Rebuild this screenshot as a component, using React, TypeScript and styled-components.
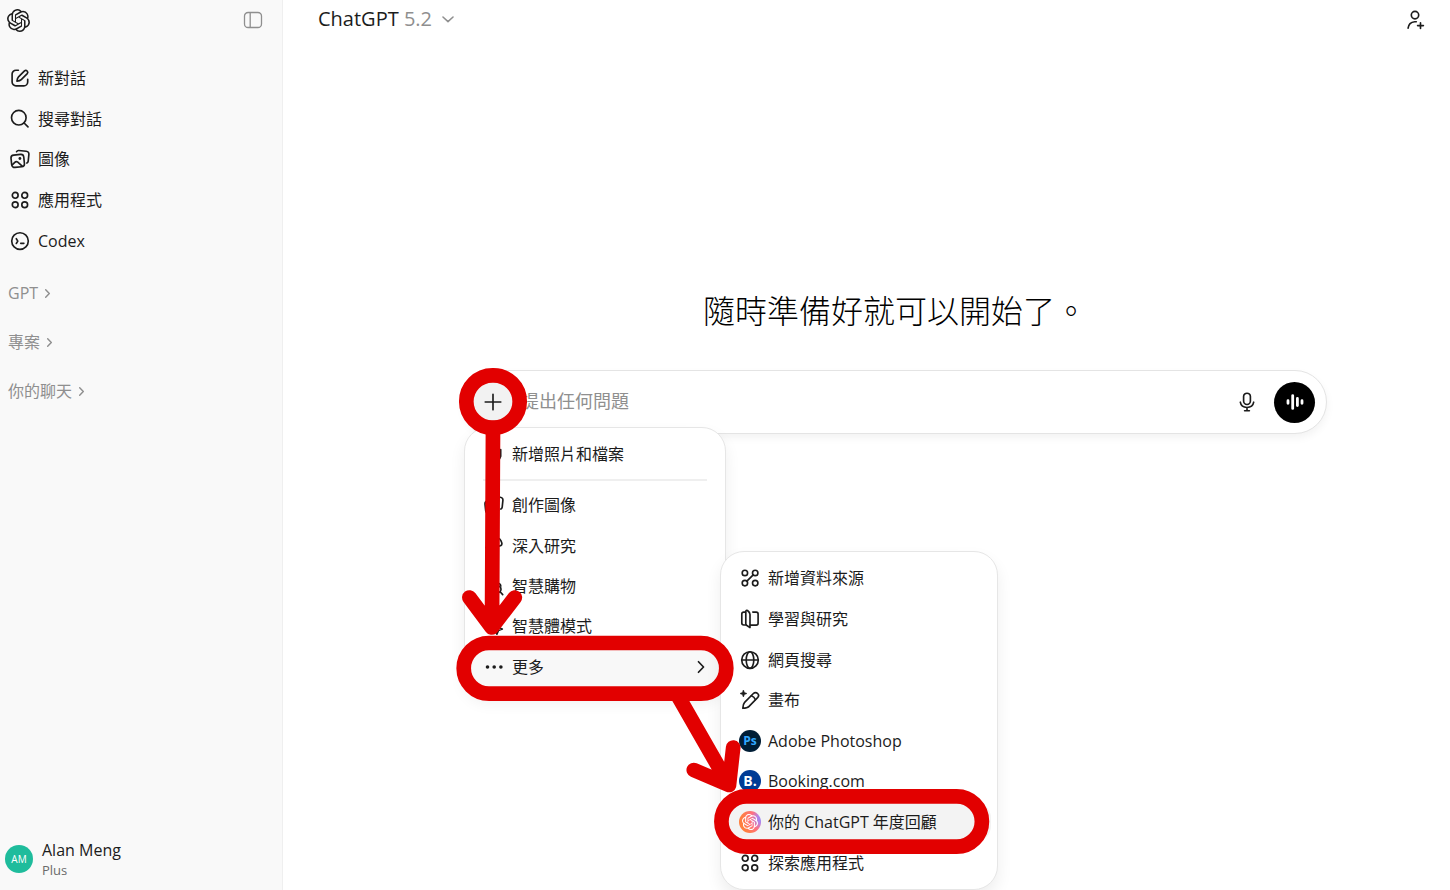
import React from "react";
import styled, { createGlobalStyle } from "styled-components";
import { SiOpenai } from "react-icons/si";

const GlobalStyle = createGlobalStyle`
  *, *::before, *::after { box-sizing: border-box; }
  body {
    margin: 0;
    background: #fff;
    color: #1c1c1c;
    font-family: "Open Sans", "Noto Sans CJK TC", sans-serif;
    font-size: 16px;
    line-height: 24px;
  }
  button, input { font: inherit; color: inherit; }
  button { border: 0; padding: 0; background: none; cursor: pointer; }
  a { color: inherit; text-decoration: none; }
`;

/* ---------- icons ---------- */

const IconSvg = styled.svg<{ $size: number }>`
  display: block;
  flex: none;
  width: ${(p) => p.$size}px;
  height: ${(p) => p.$size}px;
  fill: none;
  stroke: currentColor;
  stroke-width: 1.65;
  stroke-linecap: round;
  stroke-linejoin: round;
`;

function Icon({ size = 20, children }: { size?: number; children: React.ReactNode }) {
  return (
    <IconSvg $size={size} viewBox="0 0 20 20" aria-hidden="true">
      {children}
    </IconSvg>
  );
}

const PanelIcon = () => (
  <Icon>
    <rect x="1.5" y="2.5" width="17" height="15" rx="3.6" strokeWidth="1.3" />
    <path d="M7.2 2.8v14.4" strokeWidth="1.3" />
  </Icon>
);
const ComposeIcon = () => (
  <Icon>
    <path d="M8.4 2.2H6A3.9 3.9 0 0 0 2.1 6.1v7.8A3.9 3.9 0 0 0 6 17.8h7.8a3.9 3.9 0 0 0 3.9-3.9v-2.6" />
    <path d="M8.5 8.9l6-6a1.95 1.95 0 0 1 2.75 2.75l-6 6c-1 1-2.2 1.3-4.3 1.5.2-2.1.5-3.2 1.55-4.25z" />
  </Icon>
);
const SearchIcon = () => (
  <Icon>
    <circle cx="8.8" cy="8.7" r="7.3" />
    <path d="M14.1 14l3.9 3.8" />
  </Icon>
);
const ImagesIcon = () => (
  <Icon>
    <rect x="1.3" y="5.7" width="12.8" height="12.4" rx="3" transform="rotate(-6 7.6 11.7)" />
    <path d="M6.6 2.7c.5-.9 1.2-1.3 2.2-1.2l7.4.8c1.9.2 2.9 1.3 2.7 3.1l-.7 6.8c-.1.9-.5 1.5-1.3 1.9" />
    <path d="M2.5 15.6l2.3-2.3c.9-.9 2-.9 3-.1l4.4 3.9" />
    <circle cx="9.9" cy="9.5" r="1.4" fill="currentColor" stroke="none" />
  </Icon>
);
const AppsIcon = () => (
  <Icon>
    <circle cx="5.2" cy="5.3" r="2.9" />
    <circle cx="14.7" cy="5.3" r="2.9" />
    <circle cx="5.2" cy="14.7" r="2.9" />
    <circle cx="14.7" cy="14.7" r="2.9" />
  </Icon>
);
const CodexIcon = () => (
  <Icon>
    <circle cx="10" cy="10" r="8.3" />
    <path d="M6.3 7.7l1.5 2.4-1.5 2.4M10.7 12.3h3.2" />
  </Icon>
);
const ChevronRight = ({ size = 18 }: { size?: number }) => (
  <Icon size={size}>
    <path d="M7.2 4.2l5.6 5.8-5.6 5.8" strokeWidth={size < 16 ? 2.2 : 1.9} />
  </Icon>
);
const ChevronDown = () => (
  <Icon size={14}>
    <path d="M2.8 7.2l7.2 6.6 7.2-6.6" strokeWidth="2.2" />
  </Icon>
);
const InviteIcon = () => (
  <Icon>
    <circle cx="10" cy="5.1" r="3.7" />
    <path d="M3.1 18.2c.4-3.9 3-6.2 6.6-6.5h1.6M15.5 12.7v5.8M12.6 15.6h5.8" />
  </Icon>
);
const PlusIcon = () => (
  <Icon>
    <path d="M10 2.2v15.6M2.2 10h15.6" />
  </Icon>
);
const MicIcon = () => (
  <Icon>
    <rect x="6.6" y="1.2" width="6.8" height="11.3" rx="3.4" />
    <path d="M3.3 10.2c.6 3.4 3.2 5.3 6.7 5.3s6.1-1.9 6.7-5.3M10 15.6v2.9M7.6 18.7h4.8" />
  </Icon>
);
const VoiceIcon = () => (
  <Icon>
    <path d="M3 8.7v2.6M7.7 3.6v12.8M12.4 6.5v7M17 8.7v2.6" strokeWidth="2.8" />
  </Icon>
);
const ClipIcon = () => (
  <Icon>
    <path d="M13 6v7.5a4 4 0 0 1-8 0V5.5a2.7 2.7 0 0 1 5.4 0v7.3M16.7 5.5v6.8a7 7 0 0 1-7 5" />
  </Icon>
);
const TelescopeIcon = () => (
  <Icon>
    <path d="M2 11.5l11-9c1.800-.8 3 .2 4 2.300 1.200 2.600 1.300 4.300-.3 4.800L4 14.5zM10 12l-3 6" />
  </Icon>
);
const ShoppingIcon = () => (
  <Icon>
    <path d="M4 7h10M4 7L3 17h7M7 7a3 3 0 0 1 6 0c2 0 3.5 1 3.8 3" />
    <circle cx="13.6" cy="13.2" r="3.4" />
    <path d="M16.1 15.8l2.6 2.8" />
  </Icon>
);
const AgentIcon = () => (
  <Icon>
    <path d="M3 3h12v6M3 3v12h5M10 10l8.300 3.100-3.900 1.500-1.500 3.600z" />
  </Icon>
);
const DotsIcon = () => (
  <Icon>
    <g fill="currentColor" stroke="none">
      <circle cx="3.5" cy="10" r="1.8" />
      <circle cx="10.2" cy="10" r="1.8" />
      <circle cx="16.9" cy="10" r="1.8" />
    </g>
  </Icon>
);
const SourcesIcon = () => (
  <Icon>
    <circle cx="4.9" cy="4.9" r="2.7" />
    <circle cx="15.2" cy="4.9" r="2.7" />
    <circle cx="4.9" cy="15.1" r="2.7" />
    <circle cx="15.2" cy="15.1" r="2.7" />
    <path d="M6.9 13.1l6.3-6.2" />
  </Icon>
);
const BookIcon = () => (
  <Icon>
    <path d="M10 5.6v13l-3.1-2.1c-.7-.5-1.1-.9-1.1-1.7V2.6c0-1.2.9-1.7 1.7-1.1C9.3 2.8 10 3.8 10 5.6z" />
    <path d="M5.6 3.1H3.7c-1.2 0-1.9.7-1.9 1.9v9.1c0 1.2.7 1.9 1.9 1.9h2.4M10.3 16.1h5.900c1.200 0 1.900-.7 1.900-1.900V5c0-1.200-.7-1.900-1.900-1.900h-3.400" />
  </Icon>
);
const GlobeIcon = () => (
  <Icon>
    <circle cx="10" cy="10" r="8.3" />
    <ellipse cx="10" cy="10" rx="3.8" ry="8.3" />
    <path d="M1.8 10h16.4" />
  </Icon>
);
const CanvasIcon = () => (
  <Icon>
    <path d="M2.8 18.3c.2-2.7.5-4.6 1.8-5.9l8.8-8.9a2.95 2.95 0 0 1 4.2 4.2l-8.8 8.9c-1.3 1.3-3.4 1.6-6 1.7z" />
    <path d="M11.4 5.7c1.9.6 3.3 2 3.9 3.9" />
    <path d="M3.4 0l1 2.5 2.500 1-2.500 1-1 2.500-1-2.500-2.400-1 2.400-1z" fill="currentColor" strokeWidth="0.6" />
  </Icon>
);

/* ---------- layout ---------- */

const Page = styled.div`
  display: flex;
  min-height: 100vh;
`;

const Sidebar = styled.aside`
  display: flex;
  flex-direction: column;
  flex: none;
  width: 283px;
  padding-bottom: 11px;
  background: #f9f9f9;
  border-right: 1px solid #efefef;
`;

const SidebarTop = styled.div`
  display: flex;
  align-items: center;
  justify-content: space-between;
  height: 40px;
  padding: 0 19px 0 7px;
`;

const IconButton = styled.button<{ $muted?: boolean }>`
  display: flex;
  color: ${(p) => (p.$muted ? "#8f8f8f" : "#1c1c1c")};
`;

const NavList = styled.nav`
  display: grid;
  grid-auto-rows: 1fr;
  height: 203px;
  margin-top: 18px;
`;

const NavLink = styled.a`
  display: flex;
  align-items: center;
  gap: 8px;
  padding: 0 10px;
`;

const Sections = styled.div`
  display: flex;
  flex-direction: column;
  gap: 25px;
  margin-top: 20px;
`;

const SectionToggle = styled.button`
  display: flex;
  align-items: center;
  gap: 3px;
  padding: 0 8px;
  color: #8f8f8f;
`;

const Account = styled.button`
  display: flex;
  align-items: center;
  gap: 9px;
  margin-top: auto;
  padding: 0 5px;
  text-align: left;
`;

const Avatar = styled.span`
  display: grid;
  place-items: center;
  width: 28px;
  height: 28px;
  border-radius: 50%;
  background: #1fbc9c;
  color: #fff;
  font-size: 10px;
`;

const AccountText = styled.span`
  display: flex;
  flex-direction: column;
`;

const AccountName = styled.span`
  line-height: 22px;
`;

const AccountPlan = styled.span`
  color: #6b6b6b;
  font-size: 13px;
  line-height: 18px;
`;

const Main = styled.main`
  flex: 1;
  min-width: 0;
`;

const Header = styled.header`
  display: flex;
  align-items: center;
  justify-content: space-between;
  height: 40px;
  padding: 0 25px 0 35px;
`;

const ModelButton = styled.button`
  display: flex;
  align-items: center;
  gap: 9px;
  padding-bottom: 2px;
  color: #8f8f8f;
  font-size: 20px;
  line-height: 28px;
`;

const ModelName = styled.span`
  color: #1c1c1c;
`;

const Hero = styled.section`
  padding: 251px 123px 0 180px;
`;

const Title = styled.h1`
  margin: 0 0 39px;
  color: #000;
  font-size: 32px;
  font-weight: 300;
  line-height: 40px;
  text-align: center;
`;

const ComposerArea = styled.div`
  position: relative;
`;

const Composer = styled.form`
  display: flex;
  align-items: center;
  height: 64px;
  padding: 0 11px 0 8px;
  border: 1px solid #e4e4e4;
  border-radius: 32px;
  background: #fff;
  box-shadow: 0 4px 8px rgba(0, 0, 0, 0.05);
`;

const AddButton = styled.button`
  display: grid;
  place-items: center;
  width: 42px;
  height: 42px;
  border-radius: 50%;
  background: #f2f2f2;
`;

const Prompt = styled.input`
  flex: 1;
  min-width: 0;
  margin-left: 7px;
  padding: 0 0 2px;
  border: 0;
  outline: 0;
  background: none;
  font-size: 18px;
  line-height: 26px;
  &::placeholder { color: #8f8f8f; opacity: 1; }
`;

const MicButton = styled.button`
  display: grid;
  place-items: center;
  width: 36px;
  height: 36px;
  margin-right: 9px;
`;

const VoiceButton = styled.button`
  display: grid;
  place-items: center;
  width: 41px;
  height: 41px;
  border-radius: 50%;
  background: #000;
  color: #fff;
`;

/* ---------- menus ---------- */

const Menu = styled.div`
  position: absolute;
  top: 57px;
  left: 1px;
  width: 262px;
  padding: 6px;
  border: 1px solid #e6e6e6;
  border-radius: 24px;
  background: #fff;
  box-shadow: 0 8px 16px rgba(0, 0, 0, 0.07);
`;

const SubMenu = styled(Menu)`
  top: 181px;
  left: 257px;
  width: 278px;
`;

const MenuGroup = styled.div<{ $height: number }>`
  display: grid;
  grid-auto-rows: 1fr;
  height: ${(p) => p.$height}px;
`;

const MenuItem = styled.button<{ $active?: string }>`
  display: flex;
  align-items: center;
  gap: 7px;
  width: 100%;
  padding: 0 9px 0 12px;
  border-radius: 16px;
  background: ${(p) => p.$active ?? "none"};
  text-align: left;
  white-space: nowrap;
`;

const IconSlot = styled.span`
  display: grid;
  place-items: center;
  width: 22px;
  height: 22px;
`;

const MenuLabel = styled.span`
  flex: 1;
`;

const Separator = styled.hr`
  height: 2px;
  margin: 5px 12px 4px;
  border: 0;
  background: #efefef;
`;

const Badge = styled.span<{ $bg: string; $color?: string; $font?: number }>`
  display: grid;
  place-items: center;
  width: 22px;
  height: 22px;
  border-radius: 50%;
  background: ${(p) => p.$bg};
  color: ${(p) => p.$color ?? "#fff"};
  font-size: ${(p) => p.$font ?? 12}px;
  font-weight: 700;
  line-height: 22px;
`;

const Markup = styled.svg`
  position: absolute;
  top: -10px;
  left: -13px;
  width: 560px;
  height: 500px;
  fill: none;
  stroke: #e20000;
  stroke-width: 14.7;
  stroke-linecap: round;
  stroke-linejoin: round;
  pointer-events: none;
`;

const navItems = [
  { label: "新對話", icon: <ComposeIcon /> },
  { label: "搜尋對話", icon: <SearchIcon /> },
  { label: "圖像", icon: <ImagesIcon /> },
  { label: "應用程式", icon: <AppsIcon /> },
  { label: "Codex", icon: <CodexIcon /> },
];

const toolItems = [
  { label: "創作圖像", icon: <ImagesIcon /> },
  { label: "深入研究", icon: <TelescopeIcon /> },
  { label: "智慧購物", icon: <ShoppingIcon /> },
  { label: "智慧體模式", icon: <AgentIcon /> },
];

const reviewGradient =
  "radial-gradient(circle at 105% 35%, #8f8cf5 0%, #b583e6 18%, #ff6f80 42%, #ff7f3f 75%)";

const moreItems = [
  { label: "新增資料來源", icon: <SourcesIcon /> },
  { label: "學習與研究", icon: <BookIcon /> },
  { label: "網頁搜尋", icon: <GlobeIcon /> },
  { label: "畫布", icon: <CanvasIcon /> },
  { label: "Adobe Photoshop", icon: <Badge $bg="#001e36" $color="#31a8ff" $font={12}>Ps</Badge> },
  { label: "Booking.com", icon: <Badge $bg="#003b95" $font={14}>B.</Badge> },
  {
    label: "你的 ChatGPT 年度回顧",
    icon: <Badge $bg={reviewGradient}><SiOpenai size={16} /></Badge>,
    active: "#f3f3f3",
  },
  { label: "探索應用程式", icon: <AppsIcon /> },
];

export default function App() {
  return (
    <>
      <GlobalStyle />
      <Page>
        <Sidebar>
          <SidebarTop>
            <IconButton aria-label="ChatGPT"><SiOpenai size={23} /></IconButton>
            <IconButton $muted aria-label="關閉側邊欄"><PanelIcon /></IconButton>
          </SidebarTop>
          <NavList>
            {navItems.map((item) => (
              <NavLink href="#" key={item.label}>
                {item.icon}
                {item.label}
              </NavLink>
            ))}
          </NavList>
          <Sections>
            {["GPT", "專案", "你的聊天"].map((name) => (
              <SectionToggle key={name}>
                {name}
                <ChevronRight size={13} />
              </SectionToggle>
            ))}
          </Sections>
          <Account>
            <Avatar>AM</Avatar>
            <AccountText>
              <AccountName>Alan Meng</AccountName>
              <AccountPlan>Plus</AccountPlan>
            </AccountText>
          </Account>
        </Sidebar>

        <Main>
          <Header>
            <ModelButton>
              <span><ModelName>ChatGPT</ModelName> 5.2</span>
              <ChevronDown />
            </ModelButton>
            <IconButton aria-label="邀請"><InviteIcon /></IconButton>
          </Header>

          <Hero>
            <Title>隨時準備好就可以開始了。</Title>
            <ComposerArea>
              <Composer onSubmit={(e) => e.preventDefault()}>
                <AddButton type="button" aria-label="新增"><PlusIcon /></AddButton>
                <Prompt type="text" placeholder="提出任何問題" aria-label="提出任何問題" />
                <MicButton type="button" aria-label="聽寫"><MicIcon /></MicButton>
                <VoiceButton type="button" aria-label="語音模式"><VoiceIcon /></VoiceButton>
              </Composer>

              <Menu role="menu">
                <MenuGroup $height={40}>
                  <MenuItem role="menuitem">
                    <IconSlot><ClipIcon /></IconSlot>
                    <MenuLabel>新增照片和檔案</MenuLabel>
                  </MenuItem>
                </MenuGroup>
                <Separator />
                <MenuGroup $height={202}>
                  {toolItems.map((item) => (
                    <MenuItem role="menuitem" key={item.label}>
                      <IconSlot>{item.icon}</IconSlot>
                      <MenuLabel>{item.label}</MenuLabel>
                    </MenuItem>
                  ))}
                  <MenuItem role="menuitem" $active="#f8f8f8">
                    <IconSlot><DotsIcon /></IconSlot>
                    <MenuLabel>更多</MenuLabel>
                    <ChevronRight />
                  </MenuItem>
                </MenuGroup>
              </Menu>

              <SubMenu role="menu">
                <MenuGroup $height={325}>
                  {moreItems.map((item) => (
                    <MenuItem role="menuitem" key={item.label} $active={item.active}>
                      <IconSlot>{item.icon}</IconSlot>
                      <MenuLabel>{item.label}</MenuLabel>
                    </MenuItem>
                  ))}
                </MenuGroup>
              </SubMenu>

              <Markup viewBox="450 360 560 500" aria-hidden="true">
                <rect x="466.3" y="375.3" width="53.4" height="52.4" rx="26.2" />
                <path d="M493 428L492 627M469.4 597.5L491.8 627.5L514.8 597.5" />
                <rect x="463.7" y="643" width="262.6" height="50.6" rx="25.3" />
                <path d="M678 696L729 785M693.8 770L729 785L733.2 747.5" />
                <rect x="721.4" y="796.3" width="260.5" height="50.4" rx="25.2" />
              </Markup>
            </ComposerArea>
          </Hero>
        </Main>
      </Page>
    </>
  );
}
